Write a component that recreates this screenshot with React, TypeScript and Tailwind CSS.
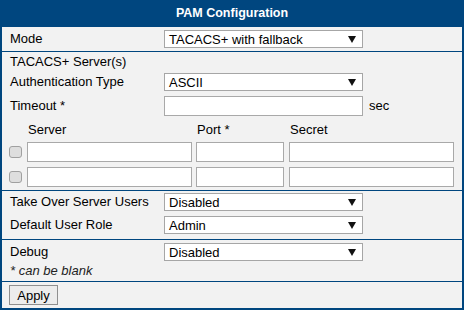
const font = { fontFamily: '"Liberation Sans", Arial, sans-serif' };

const Arrow = () => (
  <svg width="8" height="7" viewBox="0 0 8 7" className="shrink-0">
    <polygon points="0,0 8,0 4,7" fill="#111" />
  </svg>
);

const Select = ({ value }: { value: string }) => (
  <div className="flex h-[18px] w-[199px] items-center justify-between border border-[#a6a6a6] bg-white pl-[4px] pr-[6px] text-[13px] leading-none text-black">
    <span>{value}</span>
    <Arrow />
  </div>
);

const Input = ({ w }: { w: string }) => (
  <div className={`h-[20px] border border-[#a9a9a9] bg-white ${w}`} />
);

const Checkbox = () => (
  <div className="h-[12px] w-[13px] rounded-[3px] border border-[#a0a0a0] bg-[#dedede]" />
);

const Row = ({ label, children, className = "" }: { label: string; children: React.ReactNode; className?: string }) => (
  <div className={`flex items-center leading-[18px] ${className}`}>
    <div className="w-[162px] pl-[8px] text-[13px] text-black">{label}</div>
    {children}
  </div>
);

export default function App() {
  return (
    <div className="h-[310px] w-[464px] overflow-hidden" style={font}>
      <div className="flex h-full flex-col border-x-2 border-b-2 border-[#00467f] bg-[#f2f2f2]">
        <div className="flex h-[27px] shrink-0 items-center justify-center bg-[#00467f] text-[12.5px] font-bold text-white">
          PAM Configuration
        </div>

        <div className="h-[25px] border-b border-[#00467f] pt-[3px]">
          <Row label="Mode">
            <Select value="TACACS+ with fallback" />
          </Row>
        </div>

        <div className="h-[139px] border-b border-[#00467f]">
          <div className="flex h-[18px] items-center pl-[8px] pt-[2px] text-[13px] leading-[18px] text-black">TACACS+ Server(s)</div>
          <Row label="Authentication Type" className="mt-[3px] h-[18px]">
            <Select value="ASCII" />
          </Row>
          <Row label="Timeout *" className="mt-[5px] h-[20px]">
            <Input w="w-[199px]" />
            <span className="ml-[6px] text-[13px] text-black">sec</span>
          </Row>
          <div className="flex h-[26px] items-center pt-[2px] text-[13px] leading-[18px] text-black">
            <div className="w-[25px]" />
            <div className="w-[169px] pl-[1px]">Server</div>
            <div className="w-[93px] pl-[1px]">Port *</div>
            <div className="pl-[1px]">Secret</div>
          </div>
          {[0, 1].map((i) => (
            <div key={i} className={`flex h-[20px] items-center ${i ? "mt-[5px]" : ""}`}>
              <div className="flex w-[25px] justify-center pl-[1px]">
                <Checkbox />
              </div>
              <Input w="w-[165px]" />
              <div className="w-[4px]" />
              <Input w="w-[88px]" />
              <div className="w-[5px]" />
              <Input w="w-[165px]" />
            </div>
          ))}
        </div>

        <div className="h-[49px] border-b border-[#00467f] pt-[2px]">
          <Row label="Take Over Server Users" className="h-[18px]">
            <Select value="Disabled" />
          </Row>
          <Row label="Default User Role" className="mt-[5px] h-[18px]">
            <Select value="Admin" />
          </Row>
        </div>

        <div className="h-[42px] border-b border-[#00467f] pt-[3px]">
          <Row label="Debug" className="h-[18px]">
            <Select value="Disabled" />
          </Row>
          <div className="flex h-[20px] items-center pl-[8px] text-[13px] italic leading-[18px] text-[#222]">* can be blank</div>
        </div>

        <div className="pt-[3px] pl-[7px]">
          <button className="flex h-[20px] w-[49px] items-center justify-center border border-[#8f8f8f] bg-[#ececec] text-[13px] leading-none text-black">
            Apply
          </button>
        </div>
      </div>
    </div>
  );
}
